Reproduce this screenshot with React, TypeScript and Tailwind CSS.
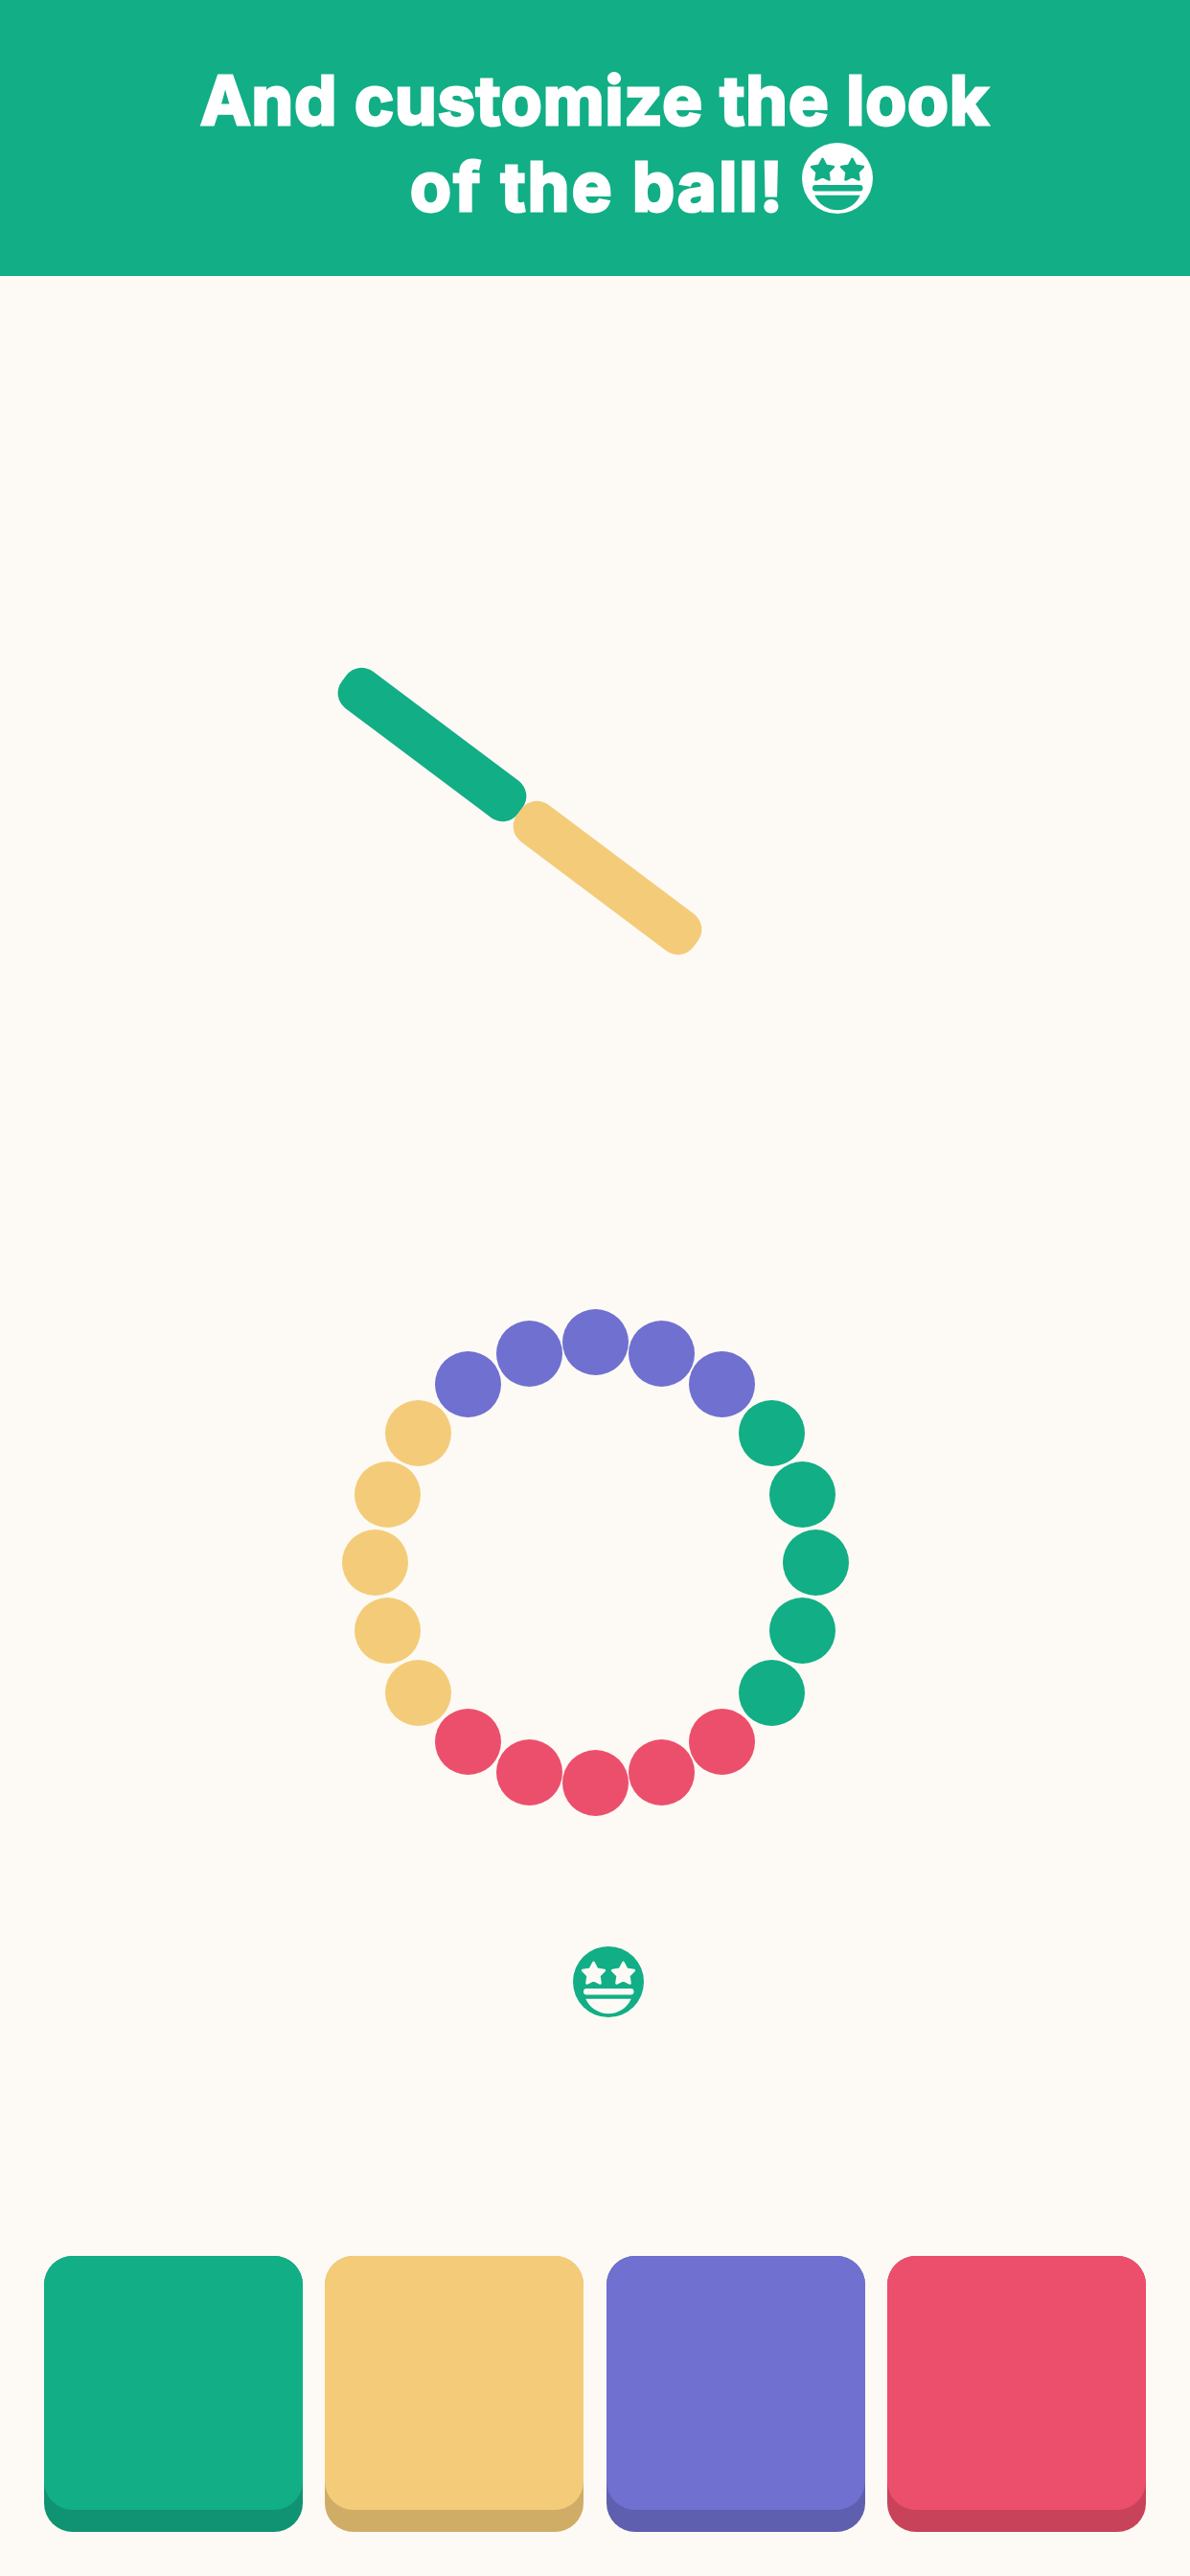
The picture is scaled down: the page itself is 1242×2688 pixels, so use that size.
const ringColors = [
  "bg-[#6f70d0]",
  "bg-[#12ae85]",
  "bg-[#ec4f6b]",
  "bg-[#f4cc79]",
];

const buttons = [
  { face: "bg-[#12ae85]", side: "bg-[#109372]" },
  { face: "bg-[#f4cc79]", side: "bg-[#cfad66]" },
  { face: "bg-[#6f70d0]", side: "bg-[#5f5fb0]" },
  { face: "bg-[#ec4f6b]", side: "bg-[#c8425a]" },
];

// the ring is not a perfect circle in the picture, so offsets are measured
const ringOffsets = [
  [-132.5, -186.5],
  [-69, -218.5],
  [0, -230],
  [69, -218.5],
  [132.5, -186.5],
  [184.5, -135.5],
  [216.5, -71],
  [230, 0],
  [216.5, 71],
  [184.5, 135.5],
  [132.5, 186.5],
  [69, 218.5],
  [0, 230],
  [-69, 218.5],
  [-132.5, 186.5],
  [-184.5, 135.5],
  [-216.5, 71],
  [-230, 0],
  [-216.5, -71],
  [-184.5, -135.5],
];

const starPoints = (cx: number, cy: number, r: number) =>
  Array.from({ length: 10 }, (_, i) => {
    const radius = i % 2 === 0 ? r : r * 0.52;
    const angle = (i * Math.PI) / 5;
    return `${cx + radius * Math.sin(angle)},${cy - radius * Math.cos(angle)}`;
  }).join(" ");

type FaceProps = {
  className: string;
  circle: string;
  feature: string;
  strokeColor: string;
};

const StarFace = ({ className, circle, feature, strokeColor }: FaceProps) => (
  <svg viewBox="0 0 74 74" className={className}>
    <circle cx="37" cy="37" r="37" className={circle} />
    <polygon
      points={starPoints(21.5, 28.8, 12)}
      className={feature}
      stroke={strokeColor}
      strokeWidth="2.5"
      strokeLinejoin="round"
    />
    <polygon
      points={starPoints(52.5, 28.8, 12)}
      className={feature}
      stroke={strokeColor}
      strokeWidth="2.5"
      strokeLinejoin="round"
    />
    <rect x="11" y="44" width="52.5" height="6.4" rx="3" className={feature} />
    <path
      d="M13.3 54.7 H60.7 A25.8 25.8 0 0 1 13.3 54.7 Z"
      className={feature}
    />
  </svg>
);

const Ring = () => (
  <div className="absolute left-[391px] top-[1112.7px] w-[460px] h-[460px]">
    {ringOffsets.map(([dx, dy], i) => (
      <div
        key={i}
        className={`absolute w-[69px] h-[69px] rounded-full ${ringColors[Math.floor(i / 5)]}`}
        style={{ left: 230 + dx - 34.5, top: 230 + dy - 34.5 }}
      />
    ))}
  </div>
);

export default function App() {
  return (
    <div className="flex flex-col w-[1242px] h-[2688px] overflow-hidden bg-[#fdfaf5] font-['Inter',sans-serif]">
      <header className="flex flex-col items-center h-[288px] pt-[60px] bg-[#12ae85] text-white text-[70px] leading-[89px] font-bold [-webkit-text-stroke:3px_white]">
        <div className="tracking-[1px]">And customize the look</div>
        <div className="flex items-center gap-[18px] pl-[97px] tracking-[2.4px]">
          <span>of the ball!</span>
          <StarFace
            className="w-[74px] h-[74px] mb-[16px]"
            circle="fill-white"
            feature="fill-[#12ae85]"
            strokeColor="#12ae85"
          />
        </div>
      </header>

      <main className="relative flex-1">
        <div className="absolute left-[336px] top-[465px] w-[230px] h-[48px] rounded-[20px] bg-[#12ae85] rotate-[36.9deg]" />
        <div className="absolute left-[519px] top-[604px] w-[230px] h-[48px] rounded-[20px] bg-[#f4cc79] rotate-[36.9deg]" />
        <Ring />
        <StarFace
          className="absolute left-[598px] top-[1743px] w-[74px] h-[74px]"
          circle="fill-[#12ae85]"
          feature="fill-[#fdfaf5]"
          strokeColor="#fdfaf5"
        />
      </main>

      <footer className="grid grid-cols-4 gap-[23.33px] px-[46px] pb-[46px]">
        {buttons.map((button, index) => (
          <div
            key={index}
            className={`h-[288px] rounded-[30px] ${button.side}`}
          >
            <div className={`h-[265px] rounded-[30px] ${button.face}`} />
          </div>
        ))}
      </footer>
    </div>
  );
}
